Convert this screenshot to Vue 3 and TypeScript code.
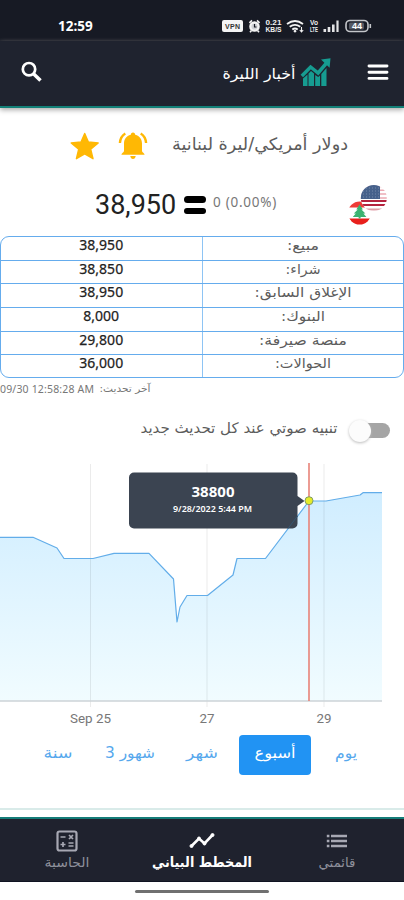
<script setup lang="ts">
interface Rate { label: string; value: string; w: number }
interface Tab { label: string; key: string; active?: boolean }

const rates: Rate[] = [
  { label: 'مبيع:', value: '38,950', w: 32 },
  { label: 'شراء:', value: '38,850', w: 35 },
  { label: 'الإغلاق السابق:', value: '38,950', w: 97 },
  { label: 'البنوك:', value: '8,000', w: 44 },
  { label: 'منصة صيرفة:', value: '29,800', w: 88 },
  { label: 'الحوالات:', value: '36,000', w: 56 },
]

const tabs: Tab[] = [
  { label: 'يوم', key: 'day' },
  { label: 'أسبوع', key: 'week', active: true },
  { label: 'شهر', key: 'month' },
  { label: 'شهور 3', key: 'quarter' },
  { label: 'سنة', key: 'year' },
]
const tabWidths: Record<string, number> = { day: 22, week: 41, month: 32, quarter: 50, year: 29 }

const points: [number, number][] = [
  [0, 82.3], [33, 82.3], [57, 93], [64, 103.5], [93, 103.5], [114, 98.3], [149, 98.3],
  [173.5, 124], [177, 167], [180, 152], [187, 140.5], [207.5, 140.5], [233, 120],
  [237, 103.5], [265.5, 103.5], [309, 46], [326, 46], [360, 40], [363, 37.7], [382, 37.7],
]
const line = points.map(p => p.join(',')).join(' ')
const area = `0,246 ${line} 382,246`
const ticks = [
  { x: 90.5, label: 'Sep 25', w: 41 },
  { x: 207, label: '27', w: 15 },
  { x: 324, label: '29', w: 15 },
]
</script>

<template>
  <div class="screen">
    <div class="status">
      <span class="clock">12:59</span>
      <svg class="status-icons" width="152" height="16" viewBox="0 0 152 16">
        <rect x="0" y="2" width="21" height="12" rx="2" fill="#f4f4f4" />
        <text x="10.5" y="10.900" class="vpn" text-anchor="middle" textLength="15">VPN</text>
        <g stroke="#f4f4f4" fill="none">
          <circle cx="32.5" cy="8.5" r="4.2" stroke-width="2.2" fill="#d0d2d6" />
          <path d="M27.4 4.8l2.6-2.4M37.6 4.8L35 2.4M29.5 12.5l-1.5 1.8M35.5 12.5l1.5 1.8" stroke-width="1.6" />
          <path d="M32.5 6v3h2" stroke="#171a24" stroke-width="1.2" />
        </g>
        <text x="51.5" y="6.800" class="tiny" text-anchor="middle" textLength="16" lengthAdjust="spacingAndGlyphs">0.21</text>
        <text x="51.5" y="14.400" class="tiny" text-anchor="middle" textLength="16" lengthAdjust="spacingAndGlyphs">KB/S</text>
        <g fill="none" stroke="#f4f4f4" stroke-width="1.8">
          <path d="M65 6q8-6 16 0M67.7 8.8q5.3-4 10.6 0M70.3 11.5q2.7-2 5.4 0" />
          <path d="M72 12.5l1 1 1-1" />
          <path d="M79.5 9v5M77.8 12l1.7 2 1.7-2" stroke-width="1.1" />
        </g>
        <text x="92" y="6.800" class="tiny" text-anchor="middle" textLength="8" lengthAdjust="spacingAndGlyphs">Vo</text>
        <text x="92" y="14.400" class="tiny" text-anchor="middle" textLength="8" lengthAdjust="spacingAndGlyphs">LTE</text>
        <path d="M101.5 11h2.6v3h-2.6zM105.7 9h2.6v5h-2.6zM110 6.5h2.6V14H110zM114.4 2.5h2.2V14h-2.2z" fill="#e4e4e6" />
        <rect x="124" y="2.5" width="22" height="11" rx="4" fill="none" stroke="#c4c6ca" stroke-width="1.6" />
        <rect x="127" y="4.5" width="15" height="7" rx="1.5" fill="#555963" />
        <path d="M148.3 6v4" stroke="#c4c6ca" stroke-width="1.6" />
        <text x="135" y="11.2" class="batt" text-anchor="middle">44</text>
      </svg>
    </div>

    <header class="header">
      <svg class="search" width="22" height="22" viewBox="0 0 22 22" fill="none" stroke="#fff">
        <circle cx="8" cy="8.200" r="6.2" stroke-width="2.7" />
        <path d="M12.500 12.800l7 6.800" stroke-width="3.5" />
      </svg>
      <div class="brand">
        <svg width="74" height="25" viewBox="0 0 74 25">
          <text class="brand-text" x="37" y="19" text-anchor="middle" direction="rtl" textLength="73" lengthAdjust="spacingAndGlyphs">أخبار الليرة</text>
        </svg>
        <svg width="31" height="29" viewBox="0 0 31 29">
          <path d="M1.8 18l8.8-9 7.5 6L27 4.5" fill="none" stroke="#169c91" stroke-width="3.5" />
          <path d="M21 1.5L30.5.3 29.6 9.8z" fill="#169c91" />
          <path d="M3 20.500l4.500-4V28H3zM8.500 15.500l2.500-2.500 3 2.500V28H8.500zM15.200 17l3 2 1.800-1.500V28h-4.800zM21.300 16l5.200-6V28h-5.200z" fill="#169c91" />
        </svg>
      </div>
      <svg class="menu" width="22" height="18" viewBox="0 0 22 18">
        <path d="M2 3h18M2 9.200h18M2 15.400h18" stroke="#fff" stroke-width="2.900" stroke-linecap="round" />
      </svg>
    </header>

    <main>
      <section class="pair">
        <svg class="star" width="30" height="30" viewBox="0 0 30 30">
          <path d="M14.700 2.500l3.700 8.500 9.800.9-7.500 6.300 2.300 9.500-8.300-4.900-8.300 4.900 2.300-9.500L1.200 11.900l9.800-.9z" fill="#ffb804" stroke="#ffb804" stroke-width="1.400" stroke-linejoin="round" />
        </svg>
        <svg class="bell" width="30" height="30" viewBox="0 0 30 30">
          <path d="M15 1.500c1.500 0 2.200 1 2.200 2.300 4.600 1.100 6.800 4.500 6.800 8.700v7.500c0 1.500 2.600 2 2.600 3.800H3.400c0-1.800 2.600-2.300 2.600-3.800v-7.500c0-4.200 2.200-7.600 6.800-8.700C12.800 2.500 13.500 1.500 15 1.500zM12.300 25h5.400c-.3 2-1.200 3-2.700 3s-2.400-1-2.700-3z" fill="#ffb804" />
          <path d="M7.300 2.500C4 4.500 2.200 7.900 1.900 12M22.700 2.500c3.300 2 5.100 5.400 5.400 9.500" fill="none" stroke="#ffb804" stroke-width="2.400" />
        </svg>
        <svg class="pair-name" width="178" height="36" viewBox="0 0 178 36">
          <text x="89" y="22" text-anchor="middle" direction="rtl" textLength="176" lengthAdjust="spacingAndGlyphs">دولار أمريكي/ليرة لبنانية</text>
        </svg>
      </section>

      <section class="price">
        <span class="amount">38,950</span>
        <span class="equal"><i></i><i></i></span>
        <span class="change">0 (0.00%)</span>
        <svg class="flags" width="40" height="42" viewBox="0 0 40 42">
          <defs>
            <clipPath id="lb"><circle cx="11.600" cy="29" r="11.500" /></clipPath>
            <clipPath id="us"><circle cx="25.800" cy="14" r="13" /></clipPath>
          </defs>
          <g clip-path="url(#lb)">
            <rect x="0" y="16" width="24" height="26" fill="#fff" />
            <rect x="0" y="16" width="24" height="7.500" fill="#ee3b37" />
            <rect x="0" y="34.500" width="24" height="8" fill="#e8201c" />
            <path d="M11.600 20.500l3.300 5h-1.500l4 4h-2l3 3.500h-5.800v1.500h-2V33H4.800l3-3.500h-2l4-4H8.300z" fill="#3cb371" />
          </g>
          <g clip-path="url(#us)">
            <rect x="12" y="0" width="28" height="28" fill="#fff" />
            <path d="M12 2.500h28M12 6.300h28M12 10.100h28M12 14h28" stroke="#ecaab4" stroke-width="1.500" />
            <path d="M12 17h28M12 21h28" stroke="#b5233f" stroke-width="2" />
            <path d="M12 25.500h28" stroke="#df9ca6" stroke-width="1.800" />
            <rect x="12" y="0" width="20" height="15" fill="#46618b" />
            <path d="M15 4h17M15 7h17M15 10h17M15 13h17" stroke="#8195b3" stroke-width=".8" stroke-dasharray="1 2" />
          </g>
        </svg>
      </section>

      <div class="table">
        <div v-for="r in rates" :key="r.label" class="row">
          <span class="value">{{ r.value }}</span>
          <span class="label">
            <svg width="120" height="22" viewBox="0 0 120 22">
              <text x="60" y="12.500" text-anchor="middle" direction="rtl" :textLength="r.w" lengthAdjust="spacingAndGlyphs">{{ r.label }}</text>
            </svg>
          </span>
        </div>
      </div>

      <div class="updated">
        <span class="stamp">09/30 12:58:28 AM</span>
        <svg width="52" height="20" viewBox="0 0 52 20">
          <text x="26" y="13" text-anchor="middle" direction="rtl" textLength="51" lengthAdjust="spacingAndGlyphs">آخر تحديث:</text>
        </svg>
      </div>

      <div class="alert">
        <svg width="200" height="30" viewBox="0 0 200 30">
          <text x="100" y="20.500" text-anchor="middle" direction="rtl" textLength="197" lengthAdjust="spacingAndGlyphs">تنبيه صوتي عند كل تحديث جديد</text>
        </svg>
        <span class="toggle"><i></i></span>
      </div>

      <svg class="chart" width="404" height="275" viewBox="0 0 404 275">
        <defs>
          <linearGradient id="fill" x1="0" y1="37" x2="0" y2="246" gradientUnits="userSpaceOnUse">
            <stop offset="0" stop-color="#d0edff" />
            <stop offset="1" stop-color="#f1fcff" />
          </linearGradient>
        </defs>
        <polygon :points="area" fill="url(#fill)" />
        <path v-for="t in ticks" :key="t.x" :d="`M${t.x} 9V252`" stroke="#000" stroke-opacity=".08" />
        <path d="M0 246H382" stroke="#ccd3d7" stroke-width="1.500" />
        <polyline :points="line" fill="none" stroke="#62ade9" stroke-width="1.200" stroke-linejoin="round" />
        <path d="M309 8V246" stroke="#e88378" stroke-width="1.600" />
        <text v-for="t in ticks" :key="t.label" :x="t.x" y="267.500" class="axis" text-anchor="middle" :textLength="t.w" lengthAdjust="spacingAndGlyphs">{{ t.label }}</text>
        <path d="M134 17.500h158.500a5 5 0 0 1 5 5V41l7 5-7 5v17.500a5 5 0 0 1-5 5H134a5 5 0 0 1-5-5v-46a5 5 0 0 1 5-5z" fill="#3b4451" />
        <path d="M288 73.500L297.500 61" stroke="#34546f" />
        <text x="213" y="42" class="tip-value" text-anchor="middle" textLength="43" lengthAdjust="spacingAndGlyphs">38800</text>
        <text x="212.500" y="57" class="tip-date" text-anchor="middle" textLength="79" lengthAdjust="spacingAndGlyphs">9/28/2022 5:44 PM</text>
        <circle cx="309" cy="45.700" r="4" fill="#e5ec29" stroke="#7f9b68" />
      </svg>

      <nav class="tabs">
        <span v-for="t in tabs" :key="t.key" class="tab" :class="[t.key, { active: t.active }]">
          <svg width="60" height="30" viewBox="0 0 60 30">
            <text x="30" y="18" text-anchor="middle" direction="rtl" :textLength="tabWidths[t.key]" lengthAdjust="spacingAndGlyphs">{{ t.label }}</text>
          </svg>
        </span>
      </nav>
    </main>

    <footer class="bottom">
      <div class="item">
        <svg width="22" height="22" viewBox="0 0 22 22" fill="none" stroke="#a7a8b3">
          <rect x="1.500" y="1.500" width="19" height="19" rx="2" stroke-width="2.200" />
          <path d="M4.500 7h5M7 12v5M4.500 14.500h5M12.500 13h5M12.500 16h5M13 5l4 4M17 5l-4 4" stroke-width="1.700" />
        </svg>
        <svg width="60" height="22" viewBox="0 0 60 22"><text x="30" y="14.500" text-anchor="middle" direction="rtl" textLength="45" lengthAdjust="spacingAndGlyphs">الحاسبة</text></svg>
      </div>
      <div class="item current">
        <svg width="26" height="22" viewBox="0 0 26 22" fill="#fff" stroke="#fff">
          <path d="M2.500 16L10 8.500l5.500 5L23.500 5" fill="none" stroke-width="2.600" />
          <circle cx="2.500" cy="16" r="1.500" /><circle cx="10" cy="8.500" r="1.500" /><circle cx="15.500" cy="13.500" r="1.500" /><circle cx="23.500" cy="5" r="1.500" />
        </svg>
        <svg width="110" height="22" viewBox="0 0 110 22"><text x="55" y="14.500" text-anchor="middle" direction="rtl" textLength="100" lengthAdjust="spacingAndGlyphs">المخطط البياني</text></svg>
      </div>
      <div class="item">
        <svg width="22" height="22" viewBox="0 0 22 22" stroke="#a7a8b3" stroke-width="2.400">
          <path d="M.8 6h2.600M5 6h16M.8 11h2.600M5 11h16M.8 16h2.600M5 16h16" />
        </svg>
        <svg width="60" height="22" viewBox="0 0 60 22"><text x="30" y="14.500" text-anchor="middle" direction="rtl" textLength="37" lengthAdjust="spacingAndGlyphs">قائمتي</text></svg>
      </div>
    </footer>
    <div class="home"><i></i></div>
  </div>
</template>

<style>
body { background: #fff; }
</style>

<style scoped>
.screen { width: 404px; height: 900px; overflow: hidden; display: flex; flex-direction: column; background: #fff; font-family: "Noto Sans", "DejaVu Sans", sans-serif; }
svg { display: block; flex: none; overflow: visible; }
svg text { font-family: "DejaVu Sans", sans-serif; }
.status { flex: none; height: 41px; box-sizing: border-box; padding: 11px 0 0 58px; display: flex; align-items: center; background: #171a24; color: #fff; }
.clock { width: 164px; font: 700 13.500px "Open Sans", sans-serif; line-height: 30px; }
svg .vpn, svg .tiny, svg .batt { font-family: "Liberation Sans", sans-serif; font-weight: 700; }
.vpn { font-size: 7px; fill: #333; }
.tiny { font-size: 6.500px; fill: #f0f0f0; }
.batt { font-size: 9px; fill: #fff; }
.header { height: 66.500px; box-sizing: border-box; border-bottom: 2px solid #128078; background: #1f232f; display: flex; align-items: center; padding: 0 15px 2px 21px; box-shadow: 0 2px 5px #aaa; flex: none; }
.brand { margin-left: auto; margin-right: 36px; display: flex; align-items: center; gap: 4px; }
.brand-text { font-size: 15px; fill: #fff; }
main { flex: none; height: 709.500px; }
.pair { height: 76px; box-sizing: border-box; padding: 1px 0 0 70px; display: flex; align-items: center; }
.bell { margin-left: 18px; }
.pair-name { margin-left: 23px; }
.pair-name text { font-size: 17px; fill: #5c5c5c; }
.price { height: 52.500px; padding-left: 95px; display: flex; align-items: flex-start; }
.amount { width: 88.500px; font: 27px/42px Roboto, sans-serif; color: #222; }
.equal { width: 22.500px; display: flex; flex-direction: column; gap: 5px; padding-top: 12.500px; }
.equal i { height: 6.500px; border-radius: 4px; background: #000; }
.change { width: 70px; margin-left: 7px; font: 13.500px/37px "Noto Sans", sans-serif; letter-spacing: .75px; color: #777; white-space: nowrap; }
.flags { margin-left: 65px; margin-top: 0; }
.table { height: 142px; box-sizing: border-box; border: 1.500px solid #65aced; border-radius: 9px; display: grid; grid-template-rows: 23.500px repeat(4, 23.700px) 1fr; overflow: hidden; }
.row { display: grid; grid-template-columns: 201.500px 1fr; border-bottom: 1.500px solid #65aced; min-height: 0; }
.row:last-child { border: 0; }
.value { text-align: center; font-size: 14px; line-height: 16px; color: #222; -webkit-text-stroke: .25px #222; border-right: 1.500px solid #8ec4f4; }
.label { display: flex; justify-content: center; }
.label text { font-size: 13.500px; fill: #5c5c5c; }
.updated { height: 21px; display: flex; align-items: center; gap: 4px; }
.stamp { width: 95px; font-size: 10.500px; color: #777; white-space: nowrap; letter-spacing: .17px; }
.updated text { font-size: 10px; fill: #777; }
.alert { height: 56px; padding-left: 139px; display: flex; align-items: center; }
.alert text { font-size: 14.500px; fill: #5c5c5c; }
.toggle { width: 34px; height: 15px; margin-left: 17px; margin-top: 7px; border-radius: 8px; background: #a5a5a5; }
.toggle i { display: block; width: 22px; height: 22px; margin: -3px 0 0 -7px; border-radius: 50%; background: #fcfcfc; box-shadow: 0 1px 3px #bbb; }
.axis { font-size: 13px; fill: #777; }
svg .axis { font-family: Roboto, sans-serif; }
svg .tip-value, svg .tip-date { font-family: "Noto Sans", sans-serif; fill: #fff; }
.tip-value { font-size: 14px; font-weight: 700; }
.tip-date { font-size: 9px; font-weight: 600; }
.tabs { display: flex; flex-direction: row-reverse; justify-content: flex-end; height: 80px; box-sizing: border-box; border-bottom: 2px solid #d9ebe9; padding: 5px 0 0 28px; }
.tab { height: 40px; display: flex; align-items: center; justify-content: center; }
.tab text { font-size: 15px; fill: #56a8ed; }
.year { width: 60px; }
.quarter { width: 84px; }
.month { width: 60px; }
.week { width: 71.500px; margin-left: 7px; border-radius: 4px; background: #2193f3; }
.day { width: 70px; }
.tabs .active text { fill: #fff; }
.bottom { flex: none; height: 65px; box-sizing: border-box; border-top: 2px solid #147c78; border-bottom: 1px solid #101322; background: #1f222e; display: grid; grid-template-columns: repeat(3, 1fr); }
.item { display: flex; flex-direction: column; align-items: center; padding-top: 11px; }
.item text { font-size: 13px; fill: #8e909b; }
.item.current text { font-weight: 700; font-size: 14px; fill: #fff; }
.home { height: 18px; display: flex; justify-content: center; align-items: center; }
.home i { width: 134px; height: 3px; border-radius: 2px; background: #707070; }
</style>
